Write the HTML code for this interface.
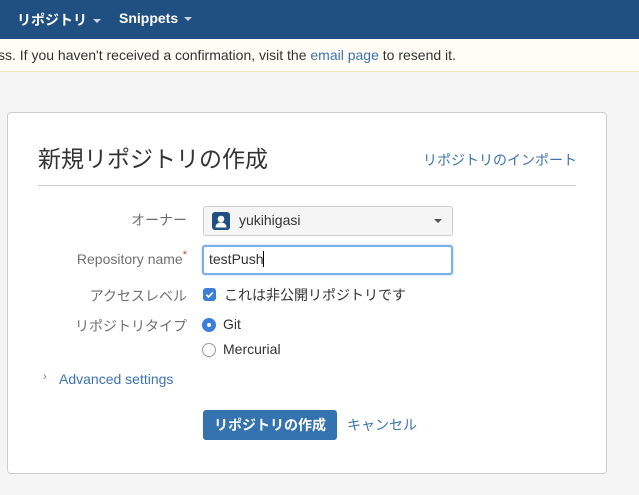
<!DOCTYPE html>
<html><head><meta charset="utf-8"><style>
*{box-sizing:border-box;margin:0;padding:0}
body{width:639px;height:495px;overflow:hidden;background:#f5f5f5;font-family:"Liberation Sans","Noto Sans CJK JP",sans-serif;color:#333;font-size:14px;position:relative}
.nav{position:absolute;left:0;top:0;width:639px;height:39px;background:#205081;color:#fff;font-weight:bold;font-size:14px}
.nav span{position:absolute;top:10px}
.caret{display:inline-block;border-left:4px solid transparent;border-right:4px solid transparent;border-top:4px solid #c9d4e3;vertical-align:middle;margin-left:6px}
.notice{position:absolute;left:0;top:39px;width:639px;height:33px;background:#fffdf5;border-bottom:1px solid #f2e6b8;font-size:14px;padding-top:8px;color:#333}
a{color:#3b73af;text-decoration:none}
.card{position:absolute;left:7px;top:112px;width:600px;height:362px;background:#fff;border:1px solid #ccc;border-radius:4px}
.abs{position:absolute}
.lbl{position:absolute;right:452px;font-size:14px;color:#707070;text-align:right;white-space:nowrap}
</style></head><body>
<div class="nav"><span style="left:17px">リポジトリ<i class="caret"></i></span><span style="left:119px">Snippets<i class="caret"></i></span></div>
<div class="notice"><span style="margin-left:-2px">ss. If you haven't received a confirmation, visit the <a>email page</a> to resend it.</span></div>
<div class="card"></div>
<div class="abs" style="left:38px;top:140px;font-size:23px;color:#333">新規リポジトリの作成</div>
<a class="abs" style="left:423px;top:150px;font-size:14px">リポジトリのインポート</a>
<div class="abs" style="left:38px;top:185px;width:538px;height:1px;background:#ccc"></div>

<div class="lbl" style="top:210px">オーナー</div>
<div class="abs" style="left:203px;top:206px;width:250px;height:30px;background:#f5f5f5;border:1px solid #ccc;border-radius:3px"></div>
<svg class="abs" style="left:212px;top:212px" width="18" height="18" viewBox="0 0 18 18"><rect width="18" height="18" rx="3" fill="#205081"/><circle cx="9" cy="7" r="3.3" fill="#fff"/><path d="M3.5 15.5c0-3.5 2.5-5 5.5-5s5.5 1.5 5.5 5z" fill="#fff"/></svg>
<div class="abs" style="left:239px;top:212px;font-size:14px;color:#333">yukihigasi</div>
<i class="abs" style="left:434px;top:219px;border-left:4px solid transparent;border-right:4px solid transparent;border-top:4px solid #555"></i>

<div class="lbl" style="top:251px">Repository name<span style="color:#d04437;font-size:11px;position:relative;top:-6px">*</span></div>
<div class="abs" style="left:202px;top:245px;width:251px;height:30px;border:2px solid #79b0ec;border-radius:3px;background:#fff;box-shadow:0 0 2px #a8ccf3"></div>
<div class="abs" style="left:209px;top:251px;font-size:14px;color:#333">testPush<span style="display:inline-block;width:1px;height:16px;background:#000;vertical-align:-3px"></span></div>

<div class="lbl" style="top:286px">アクセスレベル</div>
<div class="abs" style="left:203px;top:288px;width:13px;height:13px;background:#3b7fdb;border-radius:3px"></div>
<svg class="abs" style="left:203px;top:288px" width="13" height="13"><path d="M3.3 6.8l2.2 2.2 4.3-4.6" stroke="#fff" stroke-width="1.7" fill="none"/></svg>
<div class="abs" style="left:224px;top:285px;font-size:14px;color:#333">これは非公開リポジトリです</div>

<div class="lbl" style="top:316px">リポジトリタイプ</div>
<div class="abs" style="left:202px;top:318px;width:14px;height:14px;border-radius:50%;background:#3b7fdb"></div>
<div class="abs" style="left:207px;top:323px;width:4px;height:4px;border-radius:50%;background:#fff"></div>
<div class="abs" style="left:223px;top:316px;font-size:14px;color:#333">Git</div>
<div class="abs" style="left:202px;top:343px;width:14px;height:14px;border-radius:50%;border:1px solid #999;background:#fff"></div>
<div class="abs" style="left:223px;top:341px;font-size:14px;color:#333">Mercurial</div>

<div class="abs" style="left:43px;top:371px;font-size:11px;color:#777">›</div>
<a class="abs" style="left:59px;top:371px;font-size:14px">Advanced settings</a>

<div class="abs" style="left:203px;top:410px;width:134px;height:30px;background:#3572b0;border-radius:3px;color:#fff;font-weight:bold;font-size:14px;text-align:center;line-height:30px">リポジトリの作成</div>
<a class="abs" style="left:347px;top:415px;font-size:14px">キャンセル</a>
</body></html>
